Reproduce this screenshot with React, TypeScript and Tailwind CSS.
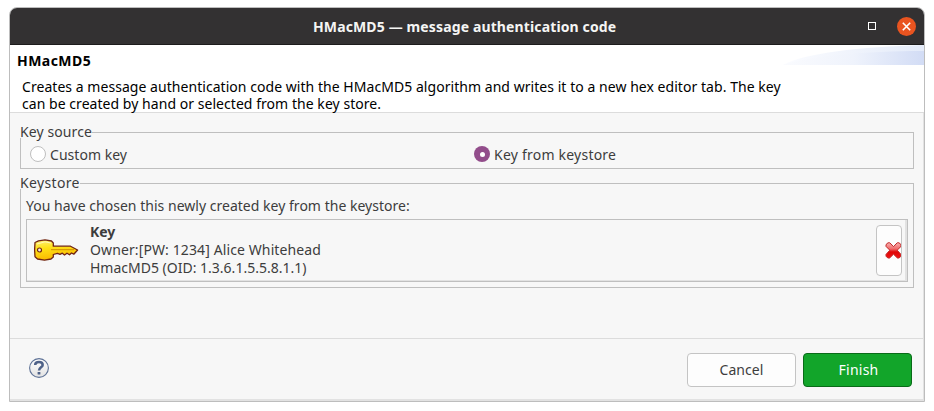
import type { ReactNode } from "react";

function TitleBar() {
  return (
    <header className="relative flex h-[37px] shrink-0 items-center justify-end rounded-t-[7px] border-b border-[#1d1c1c] bg-[#333132] pr-[8px] text-white">
      <h1 className="pointer-events-none absolute left-[303px] top-[10px] whitespace-nowrap text-[14px] font-bold leading-[18px] tracking-[0.13px] text-[#f5f5f4]">
        HMacMD5 — message authentication code
      </h1>
      <button className="mr-[21px] size-2 border border-white" aria-label="Maximize" />
      <button className="flex size-[19px] items-center justify-center rounded-full bg-[#e95420]" aria-label="Close">
        <svg width="9" height="9" viewBox="0 0 9 9" stroke="white" strokeWidth="1.6">
          <path d="M0.8 0.8L8.2 8.2M8.2 0.8L0.8 8.2" />
        </svg>
      </button>
    </header>
  );
}

function Swoosh() {
  return (
    <svg className="absolute right-0 top-0" width="141" height="20" viewBox="0 0 141 20">
      <defs>
        <linearGradient id="sweepBack" x1="0" x2="1">
          <stop offset="0" stopColor="#fbfcff" />
          <stop offset="1" stopColor="#e4ebf9" />
        </linearGradient>
        <linearGradient id="sweepFront" x1="0" x2="1">
          <stop offset="0" stopColor="#fafbfe" />
          <stop offset="0.5" stopColor="#eff3fc" />
          <stop offset="1" stopColor="#d2dcf5" />
        </linearGradient>
      </defs>
      <path d="M0 20C22 8 76 2 141 0V20Z" fill="url(#sweepBack)" />
      <path d="M0 20C26 11 82 6 141 6V20Z" fill="url(#sweepFront)" />
    </svg>
  );
}

function Group({ label, className, children }: { label: ReactNode; className: string; children: ReactNode }) {
  return (
    <section className={`relative border border-[#bfbfbf] ${className}`}>
      <div className="absolute -left-px -top-px flex h-1.5 items-center bg-[#f7f7f7]">
        <div className="-mt-1.5 whitespace-nowrap leading-[18px]">{label}</div>
      </div>
      {children}
    </section>
  );
}

function KeyIcon() {
  return (
    <svg width="46" height="24" viewBox="0 0 46 24" className="shrink-0">
      <defs>
        <linearGradient id="gold" x1="0" x2="0.25" y1="0" y2="1">
          <stop offset="0" stopColor="#fff27a" />
          <stop offset="0.45" stopColor="#ffe016" />
          <stop offset="1" stopColor="#f9b800" />
        </linearGradient>
      </defs>
      <path
        d="M2 4.5L5.5 2.8L12 1.8L18.5 3L20.3 5V8.2H37.5L44.6 12L40.8 16.2L38.5 15L36.5 16.8L34 15.2L31.5 17L29.3 15.2L27 16.3L24.5 15.3L20.3 16.5V19L18 21L11.5 22.2L4.5 21L2 18.8L1.6 12Z"
        fill="url(#gold)"
        stroke="#702414"
        strokeWidth="1.3"
        strokeLinejoin="round"
      />
      <path d="M4 6L12 3.8L18 5" fill="none" stroke="#fff9b8" strokeWidth="1" />
      <path d="M18 11.7H41" stroke="#d08c00" strokeWidth="1" />
      <circle cx="6.5" cy="12" r="2" fill="#f3eeea" stroke="#702414" strokeWidth="1.2" />
    </svg>
  );
}

function DeleteIcon() {
  return (
    <svg width="17" height="17" viewBox="0 0 17 17">
      <defs>
        <linearGradient id="redCross" x1="0" x2="0" y1="0" y2="1">
          <stop offset="0" stopColor="#f9b0b0" />
          <stop offset="0.4" stopColor="#f06a6a" />
          <stop offset="0.6" stopColor="#e00606" />
          <stop offset="1" stopColor="#f01414" />
        </linearGradient>
      </defs>
      <path
        d="M3 0.8H4.8L8.5 4.6L12.2 0.8H14L16 2.6V4.4L12.2 8.2L16 12.4V14.2L14.2 16H12.4L8.5 12.2L4.6 16H2.8L1 14.2V12.4L4.8 8.2L1 4.4V2.6Z"
        fill="url(#redCross)"
        stroke="#c02a2a"
        strokeWidth="1"
        strokeLinejoin="round"
      />
    </svg>
  );
}

function HelpIcon() {
  return (
    <svg width="20" height="20" viewBox="0 0 20 20">
      <defs>
        <linearGradient id="helpFace" x1="0" x2="0" y1="0" y2="1">
          <stop offset="0" stopColor="#ffffff" />
          <stop offset="1" stopColor="#e2e2e2" />
        </linearGradient>
      </defs>
      <circle cx="10" cy="10" r="9.4" fill="url(#helpFace)" stroke="#5e7296" strokeWidth="1.1" />
      <path d="M6.2 6.9C6.2 4.9 7.6 4 10 4C12.4 4 13.7 5.1 13.7 6.9C13.7 9.4 10 9.3 10 12.6" fill="none" stroke="#4f6288" strokeWidth="2.5" />
      <rect x="8.6" y="14" width="2.8" height="2.6" rx="0.6" fill="#4f6288" />
    </svg>
  );
}

export default function App() {
  return (
    <main className="h-[411px] w-[934px] overflow-hidden bg-white pl-[9px] pt-[7px] font-['Noto_Sans','Open_Sans',sans-serif] text-[14px] leading-[18px] text-[#3d3d3d]">
      <div className="flex h-[395px] w-[916px] flex-col rounded-t-[8px] border border-[#bdbdbd] bg-[#f7f7f7]">
        <TitleBar />

        <div className="relative h-[68px] shrink-0 border-b border-[#dcdcdc] bg-white pl-[7px] pt-[7px] text-black">
          <Swoosh />
          <h2 className="relative font-bold tracking-[0.45px]">HMacMD5</h2>
          <p className="relative mt-[8px] w-[780px] pl-[5px] leading-[17px] tracking-[0.045px]">
            Creates a message authentication code with the HMacMD5 algorithm and writes it to a new hex editor tab. The key
            can be created by hand or selected from the key store.
          </p>
        </div>

        <div className="flex min-h-0 grow flex-col border-b-2 border-r border-[#e2e2e2]">
          <div className="h-[226px] shrink-0 border-b border-[#dcdcdc] pl-[10px] pt-[19px]">
            <Group label={<span className="tracking-[0.1px]">Key source</span>} className="h-[37px] w-[894px]">
              <div className="grid grid-cols-[444px_1fr] pl-[9px] pt-[13px]">
                <label className="flex h-[17px] items-start gap-[4px]">
                  <span className="size-4 rounded-full border border-[#bfbfbf] bg-white" />
                  <span className="tracking-[0.03px]">Custom key</span>
                </label>
                <label className="flex h-[17px] items-start gap-[4px]">
                  <span className="flex size-4 items-center justify-center rounded-full bg-[#924d8b]">
                    <span className="size-[5px] rounded-full bg-white" />
                  </span>
                  <span className="tracking-[0.22px]">Key from keystore</span>
                </label>
              </div>
            </Group>

            <Group label={<span className="tracking-[0.35px]">Keystore</span>} className="mt-[14px] h-[105px] w-[894px]">
              <div className="pl-[5px] pt-[13px]">
                <p className="tracking-[0.02px]">You have chosen this newly created key from the keystore:</p>
                <div className="mt-[4px] h-[63px] w-[882px] border border-[#bfbfbf]">
                  <div className="flex h-full justify-between border-b border-r-2 border-[#e2e2e2] pl-[6px] pr-[3px]">
                    <div className="flex">
                      <div className="pt-[18px]">
                        <KeyIcon />
                      </div>
                      <div className="pl-[11px] pt-[3px]">
                        <p className="font-bold tracking-[-0.1px]">Key</p>
                        <p className="tracking-[0.11px]">Owner:[PW: 1234] Alice Whitehead</p>
                        <p>HmacMD5 (OID: 1.3.6.1.5.5.8.1.1)</p>
                      </div>
                    </div>
                    <button className="mt-[5px] flex h-[51px] w-[26px] items-center overflow-hidden rounded-[4px] border border-[#c4c4c4] bg-[#fdfdfd] pb-px pl-[8px]" aria-label="Remove key">
                      <span className="flex shrink-0">
                        <DeleteIcon />
                      </span>
                    </button>
                  </div>
                </div>
              </div>
            </Group>
          </div>

          <footer className="flex items-start justify-between pl-[19px] pr-[11px] pt-[14px]">
            <button className="mt-[5px]" aria-label="Help">
              <HelpIcon />
            </button>
            <div className="flex gap-[7px]">
              <button className="h-[34px] w-[109px] rounded-[4px] border border-[#c4c4c4] bg-[#fdfdfd] tracking-[0.05px]">Cancel</button>
              <button className="h-[34px] w-[109px] rounded-[4px] border border-[#096b18] bg-[#12a52a] pl-[2px] tracking-[0.25px] text-white">Finish</button>
            </div>
          </footer>
        </div>
      </div>
    </main>
  );
}
